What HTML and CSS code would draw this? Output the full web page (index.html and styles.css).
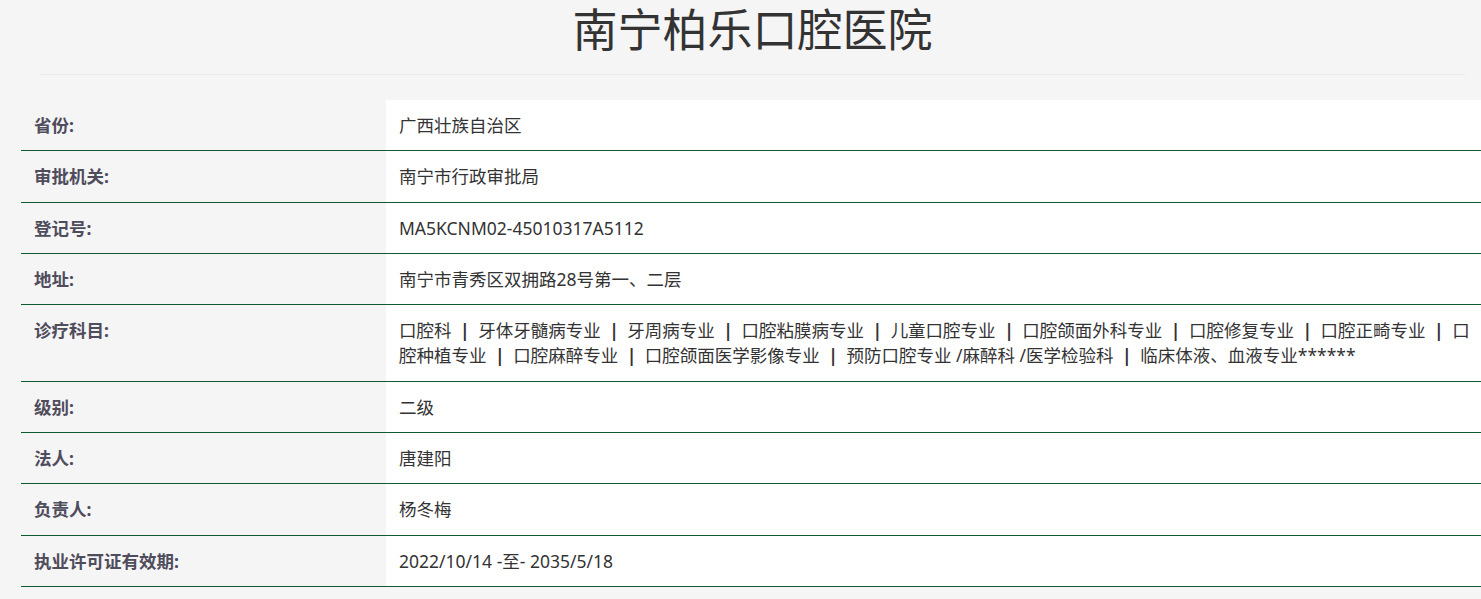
FILE: index.html
```html
<!DOCTYPE html>
<html lang="zh-CN">
<head>
<meta charset="utf-8">
<title>南宁柏乐口腔医院</title>
<link rel="stylesheet" href="styles.css">
</head>
<body>
<div class="header">
  <h1 class="title">南宁柏乐口腔医院</h1>
  <hr class="rule">
</div>
<table class="info">
  <tr><th>省份:</th><td>广西壮族自治区</td></tr>
  <tr><th>审批机关:</th><td>南宁市行政审批局</td></tr>
  <tr><th>登记号:</th><td>MA5KCNM02-45010317A5112</td></tr>
  <tr><th>地址:</th><td>南宁市青秀区双拥路28号第一、二层</td></tr>
  <tr><th>诊疗科目:</th><td>口腔科<span class="sep">|</span>牙体牙髓病专业<span class="sep">|</span>牙周病专业<span class="sep">|</span>口腔粘膜病专业<span class="sep">|</span>儿童口腔专业<span class="sep">|</span>口腔颌面外科专业<span class="sep">|</span>口腔修复专业<span class="sep">|</span>口腔正畸专业<span class="sep">|</span>口腔种植专业<span class="sep">|</span>口腔麻醉专业<span class="sep">|</span>口腔颌面医学影像专业<span class="sep">|</span>预防口腔专业 /麻醉科 /医学检验科<span class="sep">|</span>临床体液、血液专业******</td></tr>
  <tr><th>级别:</th><td>二级</td></tr>
  <tr><th>法人:</th><td>唐建阳</td></tr>
  <tr><th>负责人:</th><td>杨冬梅</td></tr>
  <tr><th>执业许可证有效期:</th><td>2022/10/14 -至- 2035/5/18</td></tr>
</table>
</body>
</html>
```
FILE: styles.css
```css
html, body {
  margin: 0;
  padding: 0;
  background: #f5f5f5;
  font-family: "Noto Sans", "Noto Sans CJK SC", sans-serif;
  color: #333;
  overflow: hidden;
}
.header {
  margin: 0 16px 0 40px;
}
.title {
  margin: 0;
  text-align: center;
  font-family: "Noto Sans CJK SC", sans-serif;
  font-size: 45px;
  font-weight: normal;
  line-height: 56px;
  color: #333;
}
.rule {
  margin: 18px 0 0 0;
  border: 0;
  border-top: 1px solid #e9e9e9;
  height: 0;
}
.info {
  margin: 25px 0 0 21px;
  width: calc(100% - 21px);
  border-collapse: collapse;
  font-size: 17.5px;
  line-height: 25.3px;
  table-layout: fixed;
}
.info th, .info td {
  padding: 13px 0 12px 13px;
  vertical-align: top;
  text-align: left;
  border-bottom: 1px solid #0f5a33;
}
.info th {
  box-sizing: border-box;
  width: 365px;
  font-weight: bold;
  color: #4f4c5c;
  background: #f5f5f5;
}
.info td {
  background: #fff;
  color: #333;
}
.sep {
  font-weight: bold;
  margin: 0 8.5px;
}
```
